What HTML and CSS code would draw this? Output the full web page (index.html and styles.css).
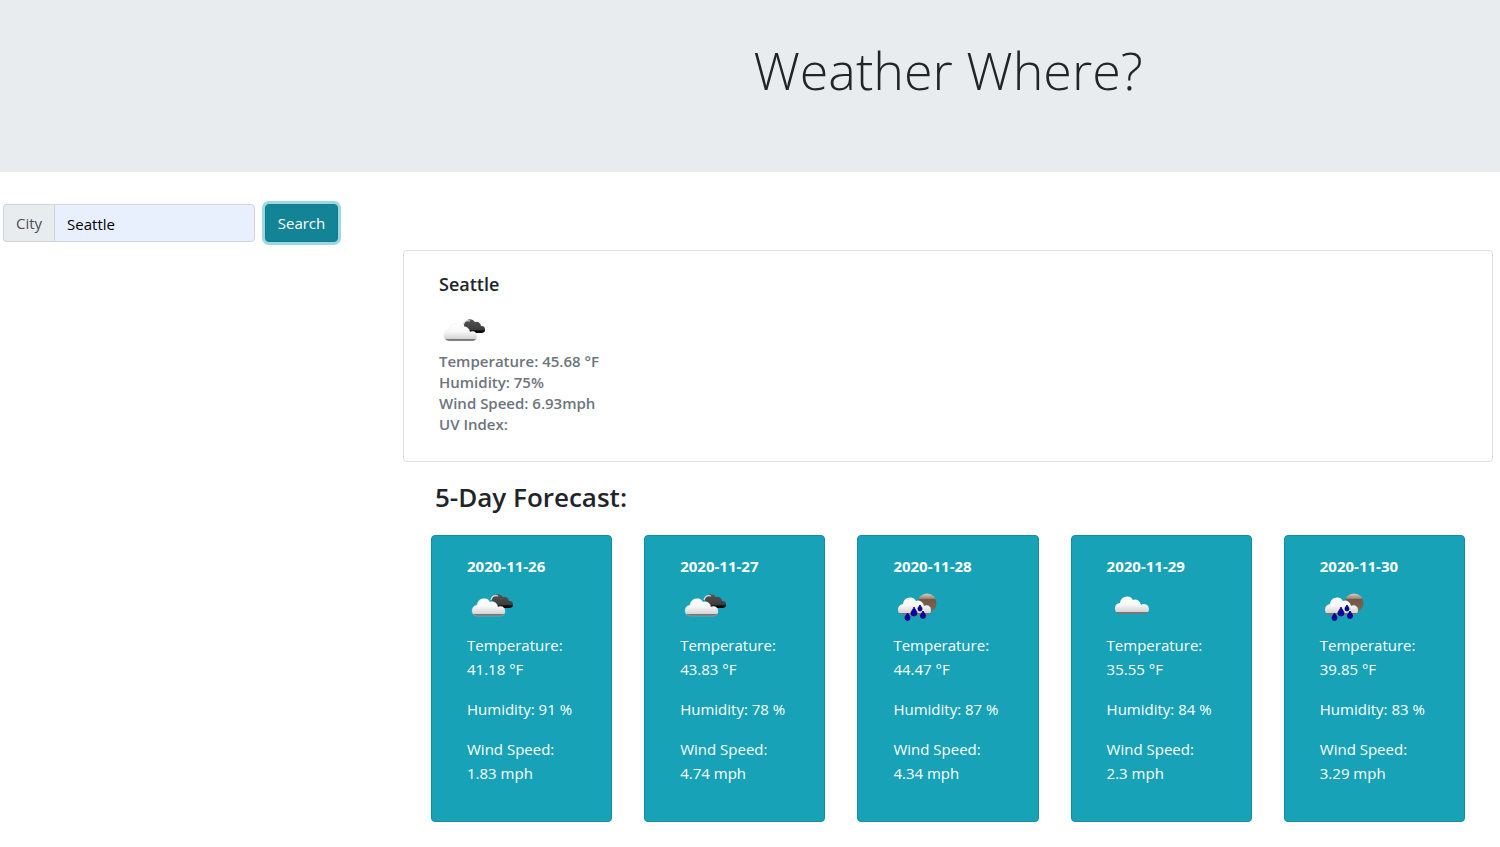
FILE: index.html
```html
<!DOCTYPE html>
<html lang="en">
<head>
<meta charset="utf-8">
<meta name="viewport" content="width=device-width, initial-scale=1">
<title>Weather Where?</title>
<link rel="stylesheet" href="styles.css">
</head>
<body>
<svg class="defs" aria-hidden="true">
  <defs>
    <linearGradient id="white" x1="0" y1="0" x2="0" y2="1">
      <stop offset="0" stop-color="#fff"/><stop offset=".45" stop-color="#f8f8f8"/><stop offset=".86" stop-color="#d6d6d6"/><stop offset=".9" stop-color="#777"/><stop offset="1" stop-color="#777"/>
    </linearGradient>
    <linearGradient id="dark" x1="0" y1="0" x2="0" y2="1">
      <stop offset="0" stop-color="#555"/><stop offset=".75" stop-color="#3c3c3c"/><stop offset=".85" stop-color="#080808"/><stop offset="1" stop-color="#111"/>
    </linearGradient>
    <linearGradient id="moon" x1="0" y1="0" x2="0" y2="1">
      <stop offset="0" stop-color="#d8cbc2"/><stop offset=".25" stop-color="#a08a7b"/><stop offset=".32" stop-color="#705845"/><stop offset="1" stop-color="#806a59"/>
    </linearGradient>
    <symbol id="broken" viewBox="0 0 50 50">
      <path fill="url(#dark)" d="M25 21a6 6 0 0 1 11-3a4.500 4.500 0 0 1 6 4a3.500 3.500 0 0 1 1 7H32a7 7 0 0 1-7-8z"/>
      <path fill="none" stroke="#ddd" stroke-width="1.200" d="M24 21c1-4 3-5 7-4"/>
      <path fill="url(#white)" stroke="#ddd" stroke-width=".3" d="M10 37a5 5 0 0 1-5-5a6 6 0 0 1 5-6a7 7 0 0 1 13-3a6 6 0 0 1 8 5a4.500 4.500 0 0 1 7 4a4.500 4.500 0 0 1-4 5z"/>
    </symbol>
    <symbol id="cloud" viewBox="0 0 50 50">
      <path fill="url(#white)" d="M13 35a5 5 0 0 1-5-5a5 5 0 0 1 5-6a7 7 0 0 1 13-3a6 6 0 0 1 8 5a5 5 0 0 1 8 4a5 5 0 0 1-4 5z"/>
    </symbol>
    <symbol id="rain" viewBox="0 0 50 50">
      <circle cx="34" cy="24" r="9.500" fill="url(#moon)"/>
      <path fill="url(#white)" d="M10 36a5 5 0 0 1-5-5a6 6 0 0 1 5-6a7 7 0 0 1 13-3a6 6 0 0 1 8 5a4.500 4.500 0 0 1 7 4a4.500 4.500 0 0 1-4 5z"/>
      <g fill="#0000b4" stroke="#000058" stroke-width=".8">
        <path d="M21 28c-1 3-3 4-3 6a3 3 0 0 0 6 0c0-2-2-3-3-6z"/>
        <path d="M27 26c-1 2-2 2-2 4a2 2 0 0 0 4 0c0-2-1-2-2-4z"/>
        <path d="M14.500 34c-1 2-2.500 3-2.500 5a2.500 2.500 0 0 0 5 0c0-2-1.500-3-2.500-5z"/>
        <path d="M30 32c-1 2-2.500 3-2.500 5a2.500 2.500 0 0 0 5 0c0-2-1.500-3-2.500-5z"/>
      </g>
    </symbol>
  </defs>
</svg>
<header class="banner"><h1 class="title">Weather Where?</h1></header>
<div class="layout">
  <aside class="sidebar">
    <form class="search">
      <div class="group">
        <label class="prefix" for="city">City</label>
        <input class="city" id="city" type="text" value="Seattle">
      </div>
      <button class="submit" type="button">Search</button>
    </form>
  </aside>
  <main class="main">
    <section class="current">
      <h2 class="place">Seattle</h2>
      <svg class="icon" role="img" aria-label="Broken clouds"><use href="#broken"/></svg>
      <p class="reading">Temperature: 45.68 °F</p>
      <p class="reading">Humidity: 75%</p>
      <p class="reading">Wind Speed: 6.93mph</p>
      <p class="reading">UV Index:</p>
    </section>
    <h2 class="heading">5-Day Forecast:</h2>
    <section class="days">
      <article class="day">
        <h3 class="date">2020-11-26</h3>
        <svg class="icon" role="img" aria-label="Broken clouds"><use href="#broken"/></svg>
        <p class="stat">Temperature:<br>41.18 °F</p><p class="stat">Humidity: 91 %</p><p class="stat">Wind Speed:<br>1.83 mph</p>
      </article>
      <article class="day">
        <h3 class="date">2020-11-27</h3>
        <svg class="icon" role="img" aria-label="Broken clouds"><use href="#broken"/></svg>
        <p class="stat">Temperature:<br>43.83 °F</p><p class="stat">Humidity: 78 %</p><p class="stat">Wind Speed:<br>4.74 mph</p>
      </article>
      <article class="day">
        <h3 class="date">2020-11-28</h3>
        <svg class="icon" role="img" aria-label="Rain"><use href="#rain"/></svg>
        <p class="stat">Temperature:<br>44.47 °F</p><p class="stat">Humidity: 87 %</p><p class="stat">Wind Speed:<br>4.34 mph</p>
      </article>
      <article class="day">
        <h3 class="date">2020-11-29</h3>
        <svg class="icon" role="img" aria-label="Cloudy"><use href="#cloud"/></svg>
        <p class="stat">Temperature:<br>35.55 °F</p><p class="stat">Humidity: 84 %</p><p class="stat">Wind Speed:<br>2.3 mph</p>
      </article>
      <article class="day">
        <h3 class="date">2020-11-30</h3>
        <svg class="icon" role="img" aria-label="Rain"><use href="#rain"/></svg>
        <p class="stat">Temperature:<br>39.85 °F</p><p class="stat">Humidity: 83 %</p><p class="stat">Wind Speed:<br>3.29 mph</p>
      </article>
    </section>
  </main>
</div>
</body>
</html>
```
FILE: styles.css
```css
* { box-sizing: border-box; }
body {
  margin: 0;
  background: #fff;
  color: #212529;
  font: 400 15px/24px "Segoe UI", "Open Sans", "Noto Sans", sans-serif;
}
h1, h2, h3, p { margin: 0; }
.defs { position: absolute; width: 0; height: 0; }
.banner {
  padding: 36px 7px 68px 403px;
  background: #e9ecef;
}
.title {
  text-align: center;
  font-size: 52px;
  line-height: 68px;
  font-weight: 300;
}
.layout {
  display: grid;
  grid-template-columns: 403px minmax(0, 1fr);
  padding: 32px 7px 24px 0;
}
.search { display: flex; gap: 10px; padding-left: 3px; }
.group { display: flex; width: 252px; height: 38px; }
.prefix {
  padding: 6px 12px;
  border: 1px solid #ced4da;
  border-right: 0;
  border-radius: 4px 0 0 4px;
  background: #e9ecef;
  color: #495057;
}
.city {
  flex: 1;
  min-width: 0;
  padding: 7px 12px 5px;
  border: 1px solid #ced4da;
  border-radius: 0 4px 4px 0;
  background: #e8f0fe;
  color: #000;
  font: inherit;
}
.submit {
  width: 73px;
  height: 38px;
  padding: 0;
  border: 1px solid #117a8b;
  border-radius: 4px;
  background: #138496;
  box-shadow: 0 0 0 3px #9dd8e2;
  color: #fff;
  font: inherit;
}
.main { padding-top: 46px; }
.current {
  padding: 21px 35px 26px;
  border: 1px solid #dfdfdf;
  border-radius: 4px;
}
.place { margin-bottom: 8px; font-size: 18px; line-height: 24px; font-weight: 600; }
.icon { display: block; width: 50px; height: 50px; }
.current .icon { margin-bottom: -3px; }
.reading { color: #6c757d; font-weight: 600; font-size: 15px; line-height: 21px; }
.heading { margin: 18px 32px 21px; font-size: 26px; line-height: 34px; font-weight: 600; }
.days {
  display: grid;
  grid-template-columns: repeat(5, minmax(0, 1fr));
  gap: 32px;
  padding: 0 28px;
}
.day {
  padding: 19px 16px 20px 35px;
  border: 1px solid #148ea1;
  border-radius: 4px;
  background: #17a2b8;
  color: #fff;
}
.date { font-size: 15px; line-height: 22px; font-weight: 700; }
.day .icon { margin: 2px 0 4px; }
.stat { margin-bottom: 16px; white-space: nowrap; }
```
